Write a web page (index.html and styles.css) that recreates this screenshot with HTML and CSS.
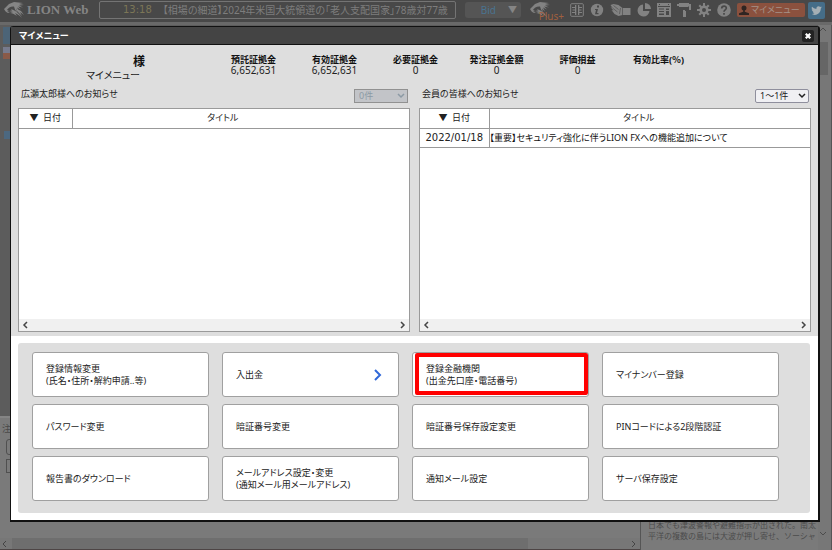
FILE: index.html
```
<!DOCTYPE html>
<html lang="ja">

<head>
    <meta charset="UTF-8">
    <meta name="viewport" content="width=device-width, initial-scale=1.0">
    <title>LION Web - マイメニュー</title>
    <link rel="stylesheet" href="styles.css">
</head>

<body>
    <header class="topbar">
        <svg class="logo-mark" viewBox="0 0 20 16" aria-hidden="true">
            <path d="M0 7 5 2l5-2 9 1-4 1 5 1-5 .5 4 2-5-1 3 3-4-2 2 4-3-3 1 4-2-3-1-3C7 4 4 6 3 8l2 1-2 1 3 0-2 1C2 10 1 9 0 7z" />
            <path d="M7 7c4 1 8 4 11 9-3-3-5-4-7-5l2 3c-3-2-5-3-7-3l3-1-4-1 3-.5z" />
            <path d="m12 8 6 6-2-4 4 3-3-4-4-2z" />
        </svg>
        <span class="logo-text">LION Web</span>
        <div class="ticker">
            <span class="ticker-time">13:18</span>
            <span class="ticker-news">【相場の細道】2024年米国大統領選の「老人支配国家」78歳対77歳</span>
        </div>
        <button type="button" class="bid">Bid <span class="bid-arrow">▼</span></button>
        <nav class="tools">
            <button type="button" class="tool plus" aria-label="Plus">
                <svg viewBox="0 0 20 16"><path d="M0 7 5 2l5-2 9 1-4 1 5 1-5 .5 4 2-5-1 3 3-4-2 2 4-3-3 1 4-2-3-1-3C7 4 4 6 3 8l2 1-2 1 3 0-2 1C2 10 1 9 0 7z" /><path d="M7 7c4 1 8 4 11 9-3-3-5-4-7-5l2 3c-3-2-5-3-7-3l3-1-4-1 3-.5z" /></svg>
                <span class="plus-text">Plus+</span>
            </button>
            <button type="button" class="tool" aria-label="レイアウト">
                <svg viewBox="0 0 14 14"><rect x=".7" y=".7" width="12.6" height="12.6" rx="1" fill="none" stroke="#828282" /><path d="M2 4h3V2h1.300v10H5v-2H2V9h3V7.500H2.500v-1H5V5H2zM8 2h1.300v2H12v1H9.300v1.500h2.200v1H9.300V9H12v1H9.300v2H8z" /></svg>
            </button>
            <button type="button" class="tool" aria-label="情報">
                <svg viewBox="0 0 14 14"><circle cx="7" cy="7" r="6.200" /><path class="cut" d="M7 2.500h2v2H7zM5 6h3l-1 4h1.500v1.300H5L6 7H5z" /></svg>
            </button>
            <button type="button" class="tool wide" aria-label="クイック入金">
                <svg viewBox="0 0 20 14"><path d="M0 2l3-1 5 1 4 3h8v7h-8l-4 1-4-2-3-4 2 .500-3-3.500 2 1z" /><path d="M2 5l5 4M3 2.500l5 4M10 5l-1 6M12 5v7" fill="none" stroke="#484848" stroke-width=".6" /></svg>
            </button>
            <button type="button" class="tool" aria-label="チャート">
                <svg viewBox="0 0 14 14"><path d="M6 1.500V8h6.500A6 6 0 1 1 6 1.500z" /><path d="M8 0a6 6 0 0 1 6 6H8z" /></svg>
            </button>
            <button type="button" class="tool" aria-label="カレンダー">
                <svg viewBox="0 0 14 14"><path d="M0 0h14v14H0z" /><path class="cut" d="M1 3h12v1H1zM2 5.500h5v1H2zM2 8h5v1H2zM2 10.500h5v1.500H2zM9 5.500h3v1.500H9zM9 8h3v4H9zM2 1h1v1H2zM11 1h1v1h-1z" /></svg>
            </button>
            <button type="button" class="tool" aria-label="配色">
                <svg viewBox="0 0 14 14"><path d="M2 0h10v1h2v6H8v1h1v6H6V7h6V3h-.5v1H2V3H0V1h2z" /></svg>
            </button>
            <button type="button" class="tool" aria-label="設定">
                <svg viewBox="0 0 14 14"><circle cx="7" cy="7" r="3.300" fill="none" stroke="#828282" stroke-width="2.600" /><path d="M6 0h2v3H6zM6 11h2v3H6zM0 6h3v2H0zM11 6h3v2h-3zM1.500 3 3 1.500l2 2L3.500 5zM9 3.500l2-2L12.500 3l-2 2zM1.500 11l2-2L5 10.500l-2 2zM9 10.500 10.500 9l2 2-1.500 1.500z" /></svg>
            </button>
            <button type="button" class="tool" aria-label="ヘルプ">
                <svg viewBox="0 0 14 14"><circle cx="7" cy="7" r="6.800" /><path d="M4.700 5.500C4.800 2.300 9.500 2.500 9.300 5.300 9.200 6.900 7 6.800 7 8.700M7 10v1.700" fill="none" stroke="#484848" stroke-width="1.700" /></svg>
            </button>
        </nav>
        <button type="button" class="mymenu">
            <svg viewBox="0 0 12 12" aria-hidden="true"><circle cx="6" cy="3.500" r="3" /><path d="M5 6h2v2l5 2v2H0v-2l5-2z" /></svg>マイメニュー
        </button>
        <a href="#" class="twitter" aria-label="Twitter">
            <svg viewBox="0 0 24 24"><path d="M23.600 4.900c-.8.400-1.700.6-2.700.8 1-.6 1.700-1.500 2-2.600-.9.500-1.900.9-3 1.100a4.700 4.700 0 0 0-8 4.300A13.400 13.400 0 0 1 2.200 3.600a4.700 4.700 0 0 0 1.500 6.300c-.8 0-1.500-.2-2.100-.6 0 2.300 1.600 4.200 3.800 4.700-.7.200-1.400.2-2.100.1.600 1.900 2.300 3.200 4.400 3.300A9.500 9.500 0 0 1 .7 19.300 13.400 13.400 0 0 0 21.300 7.400c.9-.7 1.700-1.500 2.300-2.500z" /></svg>
        </a>
    </header>

    <main class="workspace">
        <aside class="rail">
            <span class="rail-tab"></span>
            <span class="rail-flag"></span>
            <span class="rail-mark"></span>
        </aside>
        <section class="order">
            <span class="order-title">注</span>
            <span class="order-field"></span>
            <span class="order-check"></span>
            <div class="hscroll">
                <svg class="chev" viewBox="0 0 6 8"><path d="M5 1 2 4l3 3" /></svg>
                <span class="hthumb"></span>
                <svg class="chev" viewBox="0 0 6 8"><path d="m1 1 3 3-3 3" /></svg>
            </div>
        </section>
        <section class="news">
            <p>日本でも津波警報や避難指示が出された。南太<br>平洋の複数の島には大波が押し寄せ、ソーシャ</p>
        </section>
        <aside class="vscroll">
            <svg class="chev-v" viewBox="0 0 8 6"><path d="m1 5 3-3 3 3" /></svg>
            <span class="vthumb"></span>
            <svg class="chev-v" viewBox="0 0 8 6"><path d="m1 1 3 3 3-3" /></svg>
        </aside>
    </main>

    <!-- マイメニュー ダイアログ -->
    <div class="dialog" role="dialog" aria-labelledby="dialogTitle">
        <div class="dialog-head">
            <h1 id="dialogTitle">マイメニュー</h1>
            <button type="button" class="close" aria-label="閉じる">
                <svg viewBox="0 0 8 8"><path d="m1 1 6 6M7 1 1 7" /></svg>
            </button>
        </div>

        <div class="info">
            <div class="summary">
                <div class="user">
                    <strong>様</strong>
                    <span>マイメニュー</span>
                </div>
                <dl class="stats">
                    <div><dt>預託証拠金</dt><dd>6,652,631</dd></div>
                    <div><dt>有効証拠金</dt><dd>6,652,631</dd></div>
                    <div><dt>必要証拠金</dt><dd>0</dd></div>
                    <div><dt>発注証拠金額</dt><dd>0</dd></div>
                    <div><dt>評価損益</dt><dd>0</dd></div>
                    <div><dt>有効比率(％)</dt><dd></dd></div>
                </dl>
            </div>

            <div class="notices">
                <section class="notice">
                    <div class="notice-head">
                        <label for="personalPage">広瀬太郎様へのお知らせ</label>
                        <span class="picker disabled">
                            <select id="personalPage" disabled><option>0件</option></select>
                            <svg viewBox="0 0 8 6"><path d="m1 1 3 3 3-3" /></svg>
                        </span>
                    </div>
                    <div class="notice-box">
                        <table>
                            <thead>
                                <tr><th class="date-narrow">▼&nbsp; 日付</th><th class="title-narrow">タイトル</th></tr>
                            </thead>
                        </table>
                        <div class="box-scroll">
                            <svg class="chev" viewBox="0 0 6 8"><path d="M5 1 2 4l3 3" /></svg>
                            <svg class="chev" viewBox="0 0 6 8"><path d="m1 1 3 3-3 3" /></svg>
                        </div>
                    </div>
                </section>
                <section class="notice">
                    <div class="notice-head">
                        <label for="memberPage">会員の皆様へのお知らせ</label>
                        <span class="picker">
                            <select id="memberPage"><option>1～1件</option></select>
                            <svg viewBox="0 0 8 6"><path d="m1 1 3 3 3-3" /></svg>
                        </span>
                    </div>
                    <div class="notice-box">
                        <table>
                            <thead>
                                <tr><th class="date-wide">▼&nbsp; 日付</th><th class="title-wide">タイトル</th></tr>
                            </thead>
                            <tbody>
                                <tr><td class="date">2022/01/18</td><td class="subject">【重要】セキュリティ強化に伴うLION FXへの機能追加について</td></tr>
                            </tbody>
                        </table>
                        <div class="box-scroll">
                            <svg class="chev" viewBox="0 0 6 8"><path d="M5 1 2 4l3 3" /></svg>
                            <svg class="chev" viewBox="0 0 6 8"><path d="m1 1 3 3-3 3" /></svg>
                        </div>
                    </div>
                </section>
            </div>
        </div>

        <div class="menu-wrap">
            <div class="menu">
                <button type="button">登録情報変更<br>(氏名・住所・解約申請..等)</button>
                <button type="button">入出金
                    <svg class="arrow" viewBox="0 0 8 12"><path d="m1 1 5 5-5 5" /></svg>
                </button>
                <button type="button" class="marked">登録金融機関<br>(出金先口座・電話番号)</button>
                <button type="button">マイナンバー登録</button>
                <button type="button">パスワード変更</button>
                <button type="button">暗証番号変更</button>
                <button type="button">暗証番号保存設定変更</button>
                <button type="button">PINコードによる2段階認証</button>
                <button type="button">報告書のダウンロード</button>
                <button type="button">メールアドレス設定・変更<br>(通知メール用メールアドレス)</button>
                <button type="button">通知メール設定</button>
                <button type="button">サーバ保存設定</button>
            </div>
        </div>
    </div>
</body>

</html>
```
FILE: styles.css
```
* {
    box-sizing: border-box;
}

body {
    margin: 0;
    height: 100vh;
    display: flex;
    flex-direction: column;
    overflow: hidden;
    background-color: #777;
    font-family: "Noto Sans", "Noto Sans CJK JP", sans-serif;
    font-feature-settings: "palt";
    font-size: 9px;
    line-height: 12px;
    color: #222;
}

button,
select {
    font: inherit;
    font-feature-settings: inherit;
    color: inherit;
    margin: 0;
    padding: 0;
}

svg {
    display: block;
}

/* top bar */
.topbar {
    display: flex;
    align-items: center;
    flex: none;
    height: 22px;
    padding: 0 7px 2px 4px;
    background-color: #484848;
}

.logo-mark {
    width: 20px;
    height: 16px;
    fill: #858585;
}

.logo-text {
    width: 75px;
    padding-left: 3px;
    font-family: "Liberation Serif", serif;
    font-size: 13px;
    font-weight: bold;
    line-height: 18px;
    color: #858585;
    white-space: nowrap;
}

.ticker {
    display: flex;
    flex: 1;
    min-width: 0;
    height: 18px;
    padding-left: 23px;
    gap: 11px;
    align-items: center;
    border: 1px solid #747474;
    border-radius: 2px;
    font-size: 10px;
    color: #7d7d7d;
    white-space: nowrap;
    overflow: hidden;
}

.ticker-time {
    font-family: "DejaVu Sans", sans-serif;
    color: #7c7657;
}

.bid {
    display: flex;
    justify-content: flex-end;
    align-items: center;
    gap: 12px;
    width: 56px;
    height: 16px;
    margin: 0 9px;
    padding-right: 4px;
    border: none;
    border-radius: 3px;
    background-color: #555;
    font-size: 10px;
    color: #4a7390;
}

.bid-arrow {
    font-size: 9px;
    color: #858585;
}

.tools {
    display: flex;
    align-items: center;
    gap: 6px;
}

.tool {
    width: 14px;
    height: 14px;
    border: none;
    background: none;
    fill: #828282;
}

.tool.wide {
    width: 21px;
}

.tool svg {
    width: 100%;
    height: 100%;
}

.tool .cut {
    fill: #484848;
}

.tool.plus {
    position: relative;
    width: 34px;
    height: 16px;
}

.tool.plus svg {
    width: 20px;
}

.plus-text {
    position: absolute;
    right: 0;
    bottom: -3px;
    font-size: 10px;
    line-height: 10px;
    color: #a0603f;
}

.mymenu {
    display: flex;
    align-items: center;
    gap: 2px;
    width: 68px;
    height: 14px;
    margin: 0 3px 0 6px;
    padding-left: 2px;
    border: none;
    border-radius: 2px;
    background-color: #8b513e;
    color: #a59288;
    white-space: nowrap;
}

.mymenu svg {
    width: 10px;
    height: 10px;
    fill: #302522;
}

.twitter {
    width: 17px;
    height: 17px;
    padding: 3px;
    border-radius: 2px;
    background-color: #456d88;
}

.twitter svg {
    fill: #a5afb5;
}

/* dimmed workspace */
.workspace {
    display: grid;
    flex: 1;
    min-height: 0;
    grid-template-columns: 641px 1fr 14px;
    grid-template-rows: 1fr 132px;
    border-top: 3px solid #696969;
    background-color: #7a7a7a;
}

.rail {
    grid-column: 1 / 3;
    display: flex;
    flex-direction: column;
    background-color: #5c5c5c;
    border-bottom: 2px solid #858585;
}

.rail-tab {
    width: 8px;
    height: 17px;
    margin: 2px 0 3px 3px;
    background-color: #4c6477;
}

.rail-flag {
    width: 8px;
    height: 12px;
    margin: 0 0 72px 3px;
    border-top: 6px solid #777b8d;
    background-color: #8a5a48;
}

.rail-mark {
    width: 7px;
    height: 8px;
    margin-left: 4px;
    background-color: #4c6880;
}

.vscroll {
    grid-column: 3;
    grid-row: 1 / 3;
    display: flex;
    flex-direction: column;
    align-items: center;
    padding: 1px 3px 13px 0;
    border-right: 1px solid #555;
    background-color: #777;
}

.chev-v {
    width: 8px;
    height: 6px;
    fill: none;
    stroke: #4c4c4c;
}

.vthumb {
    width: 100%;
    height: 33px;
    margin: 10px 0 auto;
    background-color: #666;
}

.order {
    display: flex;
    flex-direction: column;
    border-right: 1px solid #555;
}

.order-title {
    padding: 5px 0 0 2px;
    color: #494949;
}

.order-field,
.order-check {
    width: 20px;
    height: 16px;
    margin: 4px 0 0 6px;
    border: 1px solid #505050;
    border-radius: 3px;
}

.order-check {
    height: 14px;
    border-radius: 0;
}

.hscroll {
    display: flex;
    align-items: center;
    gap: 5px;
    height: 12px;
    margin-top: auto;
    padding: 0 3px 0 1px;
    border-bottom: 1px solid #4d4545;
    background-color: #777;
}

.hthumb {
    width: 516px;
    height: 100%;
    margin-right: auto;
    background-color: #6e6e6e;
}

.chev {
    width: 6px;
    height: 8px;
    fill: none;
    stroke: #444;
    stroke-width: 1.5;
}

.hscroll .chev {
    stroke-width: 1;
}

.news {
    display: flex;
    align-items: flex-end;
    padding: 0 0 9px 7px;
    overflow: hidden;
}

.news p {
    margin: 0;
    font-size: 8px;
    font-feature-settings: normal;
    line-height: 11px;
    color: #4c4c4c;
    white-space: nowrap;
}

/* dialog */
.dialog {
    position: absolute;
    top: 26px;
    left: 10px;
    right: 12px;
    border: 1px solid #111;
    border-right-width: 2px;
    border-bottom-width: 2px;
    border-radius: 3px 3px 0 0;
    background-color: #fff;
}

.dialog-head {
    display: flex;
    justify-content: space-between;
    align-items: center;
    height: 18px;
    padding: 0 4px 0 8px;
    border-bottom: 1px solid #111;
    background-color: #444;
}

.dialog-head h1 {
    margin: 0;
    font-size: 9px;
    line-height: 12px;
    color: #fff;
}

.close {
    width: 12px;
    height: 12px;
    padding: 3px;
    border: none;
    border-radius: 2px;
    background-color: #222;
}

.close svg {
    fill: none;
    stroke: #fff;
    stroke-width: 3;
}

.info {
    padding: 8px 7px 4px;
    background-color: #dedede;
}

.summary {
    display: flex;
    height: 35px;
}

.user {
    display: flex;
    flex-direction: column;
    align-items: flex-end;
    width: 127px;
    padding-top: 2px;
}

.user strong {
    font-size: 12px;
    line-height: 14px;
    color: #111;
}

.user span {
    padding-right: 5px;
    font-size: 10px;
    line-height: 12px;
}

.stats {
    display: grid;
    grid-template-columns: repeat(6, 81px);
    margin: 0 0 0 68px;
    padding-top: 1px;
    text-align: center;
    white-space: nowrap;
}

.stats dt {
    font-weight: bold;
    line-height: 11px;
    color: #111;
}

.stats dd {
    margin: 0;
    font-size: 10px;
    line-height: 10px;
}

.notices {
    display: grid;
    grid-template-columns: 1fr 1fr;
    gap: 9px;
}

.notice-head {
    display: flex;
    justify-content: space-between;
    height: 20px;
    padding: 0 2px 0 3px;
}

.picker {
    position: relative;
    width: 54px;
    height: 14px;
    margin-top: 1px;
}

.picker select {
    display: block;
    width: 100%;
    height: 100%;
    padding-left: 4px;
    border: 1px solid #8f8f9d;
    border-radius: 2px;
    appearance: none;
    background-color: #f0f0f3;
}

.picker svg {
    position: absolute;
    top: 4px;
    right: 3px;
    width: 8px;
    height: 6px;
    fill: none;
    stroke: #222;
    stroke-width: 1.5;
    pointer-events: none;
}

.picker.disabled select {
    border-color: #919191;
    border-radius: 0;
    background-color: #c2c4c8;
    color: #8c9aa5;
    opacity: 1;
}

.picker.disabled svg {
    stroke: #8c9aa5;
}

.notice-box {
    display: flex;
    flex-direction: column;
    justify-content: space-between;
    height: 224px;
    border: 1px solid #9a9a9a;
    background-color: #fff;
}

table {
    width: 100%;
    border-collapse: collapse;
}

th,
td {
    height: 19px;
    padding: 0;
    border-bottom: 1px solid #999;
    font-weight: normal;
    white-space: nowrap;
}

th:first-child,
td:first-child {
    border-right: 1px solid #999;
    text-align: center;
}

.date-narrow {
    width: 53px;
}

.date-wide {
    width: 69px;
}

.title-narrow {
    padding-right: 36px;
}

.title-wide {
    padding-right: 22px;
}

.date {
    font-family: "DejaVu Sans", sans-serif;
    font-size: 10px;
}

.subject {
    color: #111;
}

.box-scroll {
    display: flex;
    justify-content: space-between;
    align-items: center;
    height: 12px;
    padding: 0 3px;
    background-color: #f0f0f0;
}

/* menu buttons */
.menu-wrap {
    padding: 7px 8px 7px 7px;
}

.menu {
    display: grid;
    grid-template-columns: repeat(4, 1fr);
    gap: 7px 13px;
    padding: 9px 31px 12px 14px;
    border-radius: 3px;
    background-color: #dedede;
}

.menu button {
    position: relative;
    height: 45px;
    padding: 0 13px;
    border: 1px solid #a0a0a0;
    border-radius: 3px;
    background-color: #fff;
    text-align: left;
    white-space: nowrap;
}

.menu .arrow {
    position: absolute;
    top: 16px;
    right: 16px;
    width: 8px;
    height: 12px;
    fill: none;
    stroke: #3068d8;
    stroke-width: 2;
}

/* highlighted entry */
.menu .marked::after {
    content: "";
    position: absolute;
    inset: 0 0 1px 2px;
    border: 4px solid #f00;
    border-radius: 2px;
}
```
